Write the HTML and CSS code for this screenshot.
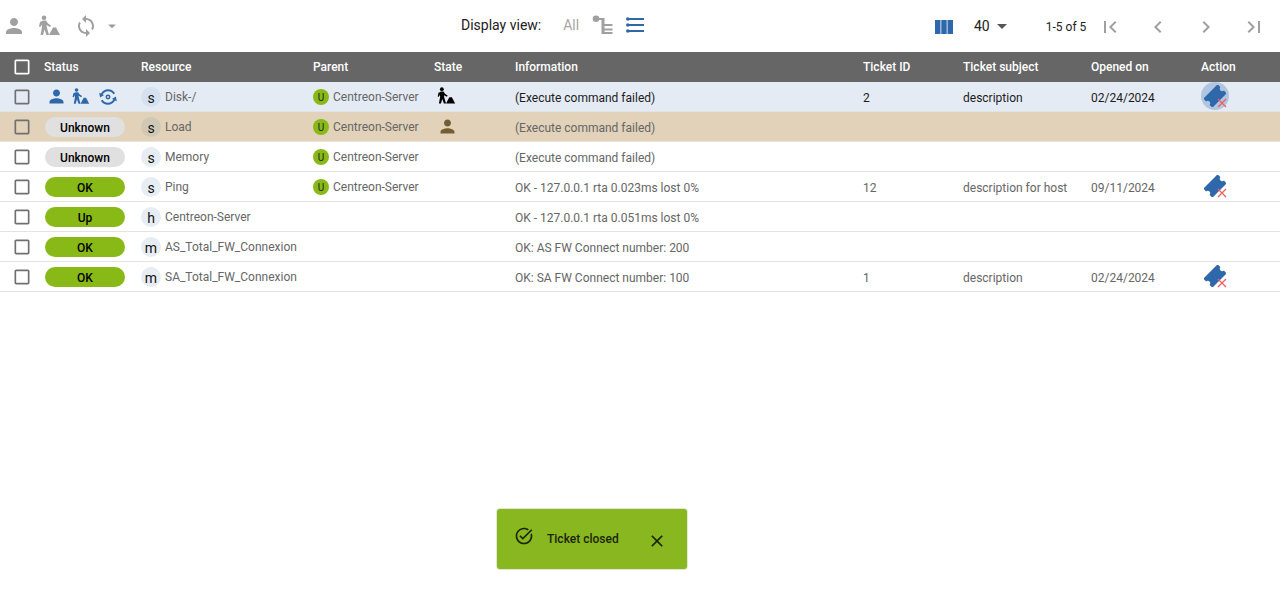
FILE: index.html
```html
<!DOCTYPE html>
<html lang="en">
<head>
<meta charset="utf-8">
<title>Resources</title>
<link rel="stylesheet" href="styles.css">
</head>
<body>
<svg class="defs" width="0" height="0" aria-hidden="true">
  <symbol id="i-person" viewBox="0 0 24 24"><path d="M12 12c2.21 0 4-1.79 4-4s-1.79-4-4-4-4 1.79-4 4 1.79 4 4 4zm0 2c-2.67 0-8 1.34-8 4v2h16v-2c0-2.66-5.33-4-8-4z"/></symbol>
  <symbol id="i-downtime" viewBox="0 0 24 24"><circle cx="7" cy="3.800" r="2.300"/><path d="M3 8 6 6.500h3L11 9.500l3 2-1 1.500-3.500-2 .5 3 2 7H9.500L7.500 15.500 6 21H3.500L5 13l-.5-2.500-1 2.500L2 12.500z"/><path d="M12 21 16 13.500h3L23 21z"/></symbol>
  <symbol id="i-sync" viewBox="0 0 24 24"><path d="M12 4V1L8 5l4 4V6c3.310 0 6 2.690 6 6 0 1.010-.25 1.970-.7 2.800l1.460 1.460C19.540 15.030 20 13.570 20 12c0-4.420-3.580-8-8-8zm0 14c-3.310 0-6-2.690-6-6 0-1.010.25-1.970.7-2.800L5.240 7.740C4.460 8.970 4 10.430 4 12c0 4.420 3.580 8 8 8v3l4-4-4-4v3z"/></symbol>
  <symbol id="i-flapping" viewBox="0 0 24 24"><path d="M12 3.500c-3.300 0-6.200 1.900-7.600 4.700l-2-.7 1 5 4.400-2.600-1.700-.7C7.200 7.100 9.400 5.700 12 5.700c2.500 0 4.700 1.300 5.900 3.300l1.900-1.100C18.200 5.300 15.300 3.500 12 3.500zM12 20.500c3.300 0 6.200-1.900 7.600-4.700l2 .7-1-5-4.400 2.600 1.700.7c-1.100 2-3.300 3.500-5.900 3.500-2.500 0-4.700-1.300-5.900-3.300l-1.900 1.100c1.600 2.600 4.500 4.400 7.800 4.400z"/><path fill-rule="evenodd" d="M12 9.300a2.700 2.700 0 1 0 0 5.400 2.700 2.700 0 0 0 0-5.400zm0 1.700a1 1 0 1 1 0 2 1 1 0 0 1 0-2z"/></symbol>
  <symbol id="i-box" viewBox="0 0 24 24"><path d="M19 5v14H5V5h14m0-2H5c-1.100 0-2 .9-2 2v14c0 1.100.9 2 2 2h14c1.100 0 2-.9 2-2V5c0-1.100-.9-2-2-2z"/></symbol>
  <symbol id="i-caret" viewBox="0 0 24 24"><path d="M7 10l5 5 5-5z"/></symbol>
  <symbol id="i-first" viewBox="0 0 24 24"><path d="M18.410 16.590 13.820 12l4.590-4.590L17 6l-6 6 6 6zM6 6h2v12H6z"/></symbol>
  <symbol id="i-prev" viewBox="0 0 24 24"><path d="M15.410 7.410 14 6l-6 6 6 6 1.410-1.410L10.830 12z"/></symbol>
  <symbol id="i-next" viewBox="0 0 24 24"><path d="M10 6 8.590 7.410 13.170 12l-4.580 4.590L10 18l6-6z"/></symbol>
  <symbol id="i-last" viewBox="0 0 24 24"><path d="M5.590 7.410 10.180 12l-4.590 4.590L7 18l6-6-6-6zM16 6h2v12h-2z"/></symbol>
  <symbol id="i-close" viewBox="0 0 24 24"><path d="M19 6.410 17.590 5 12 10.590 6.410 5 5 6.410 10.590 12 5 17.590 6.410 19 12 13.410 17.590 19 19 17.590 13.410 12z"/></symbol>
  <symbol id="i-task" viewBox="0 0 24 24"><path d="M22 5.180 10.590 16.600l-4.240-4.240 1.410-1.410 2.830 2.830 10-10L22 5.180zm-2.210 5.040c.13.57.21 1.170.21 1.780 0 4.420-3.580 8-8 8s-8-3.580-8-8 3.580-8 8-8c1.580 0 3.040.46 4.280 1.250l1.440-1.440C16.100 2.670 14.130 2 12 2 6.480 2 2 6.480 2 12s4.480 10 10 10 10-4.480 10-10c0-1.190-.22-2.330-.6-3.390l-1.610 1.610z"/></symbol>
  <symbol id="i-ticket" viewBox="0 0 24 24"><path transform="rotate(-45 12 12)" d="M23 9.300V5H1v4.300c1.300 0 2.500 1.200 2.500 2.700S2.300 14.700 1 14.700V19h22v-4.300c-1.300 0-2.500-1.200-2.500-2.700s1.200-2.700 2.500-2.700z"/></symbol>
</svg>

<header class="toolbar">
  <div class="tool-group">
    <svg class="ic ic-person"><use href="#i-person"/></svg>
    <svg class="ic ic-down"><use href="#i-downtime"/></svg>
    <svg class="ic ic-sync"><use href="#i-sync"/></svg>
    <svg class="ic ic-caret"><use href="#i-caret"/></svg>
  </div>
  <div class="view-group">
    <span class="view-label">Display view:</span>
    <span class="view-all">All</span>
    <svg class="view-tree" viewBox="0 0 21 19"><circle cx="4" cy="3.700" r="3.300"/><path d="M6 3h6.500v16H9.500V5H6z"/><path d="M11 9h9.500v2H11zM11 13.500h9.500v2H11zM11 17h9.500v2H11z"/></svg>
    <svg class="view-list" viewBox="0 0 18 16"><circle cx="1.800" cy="2" r="1.800"/><circle cx="1.800" cy="8" r="1.800"/><circle cx="1.800" cy="14" r="1.800"/><path d="M2 1h16v2H2zM2 7h16v2H2zM2 13h16v2H2z"/></svg>
  </div>
  <div class="page-group">
    <svg class="columns" viewBox="0 0 18 14"><path d="M0 0h5.500v14H0zM6.300 0h5.400v14H6.300zM12.500 0H18v14h-5.500z"/></svg>
    <span class="per-page">40</span>
    <svg class="ic ic-per"><use href="#i-caret"/></svg>
    <span class="range">1-5 of 5</span>
    <svg class="ic ic-nav first"><use href="#i-first"/></svg>
    <svg class="ic ic-nav prev"><use href="#i-prev"/></svg>
    <svg class="ic ic-nav next"><use href="#i-next"/></svg>
    <svg class="ic ic-nav last"><use href="#i-last"/></svg>
  </div>
</header>

<main class="table">
  <div class="row head">
    <div class="cell c-box"><svg class="box"><use href="#i-box"/></svg></div>
    <div class="cell">Status</div><div class="cell">Resource</div><div class="cell">Parent</div><div class="cell">State</div><div class="cell">Information</div><div class="cell">Ticket ID</div><div class="cell">Ticket subject</div><div class="cell">Opened on</div><div class="cell">Action</div>
  </div>

  <div class="row selected">
    <div class="cell c-box"><svg class="box"><use href="#i-box"/></svg></div>
    <div class="cell actions">
      <svg class="ra ra-person"><use href="#i-person"/></svg>
      <svg class="ra ra-down"><use href="#i-downtime"/></svg>
      <svg class="ra ra-flap"><use href="#i-flapping"/></svg>
    </div>
    <div class="cell res"><span class="avatar">S</span><span class="name">Disk-/</span></div>
    <div class="cell res"><span class="dot">U</span><span class="name">Centreon-Server</span></div>
    <div class="cell"><svg class="state state-down"><use href="#i-downtime"/></svg></div>
    <div class="cell info">(Execute command failed)</div>
    <div class="cell info">2</div><div class="cell info">description</div><div class="cell info">02/24/2024</div>
    <div class="cell"><span class="ticket hover"><svg class="tk"><use href="#i-ticket"/></svg><svg class="tx" viewBox="0 0 10 10"><path d="M1 1l8 8M9 1l-8 8"/></svg></span></div>
  </div>

  <div class="row ack">
    <div class="cell c-box"><svg class="box"><use href="#i-box"/></svg></div>
    <div class="cell"><span class="pill unknown">Unknown</span></div>
    <div class="cell res"><span class="avatar">S</span><span class="name">Load</span></div>
    <div class="cell res"><span class="dot">U</span><span class="name">Centreon-Server</span></div>
    <div class="cell"><svg class="state state-person"><use href="#i-person"/></svg></div>
    <div class="cell info">(Execute command failed)</div>
    <div class="cell"></div><div class="cell"></div><div class="cell"></div><div class="cell"></div>
  </div>

  <div class="row">
    <div class="cell c-box"><svg class="box"><use href="#i-box"/></svg></div>
    <div class="cell"><span class="pill unknown">Unknown</span></div>
    <div class="cell res"><span class="avatar">S</span><span class="name">Memory</span></div>
    <div class="cell res"><span class="dot">U</span><span class="name">Centreon-Server</span></div>
    <div class="cell"></div>
    <div class="cell info">(Execute command failed)</div>
    <div class="cell"></div><div class="cell"></div><div class="cell"></div><div class="cell"></div>
  </div>

  <div class="row">
    <div class="cell c-box"><svg class="box"><use href="#i-box"/></svg></div>
    <div class="cell"><span class="pill ok">OK</span></div>
    <div class="cell res"><span class="avatar">S</span><span class="name">Ping</span></div>
    <div class="cell res"><span class="dot">U</span><span class="name">Centreon-Server</span></div>
    <div class="cell"></div>
    <div class="cell info">OK - 127.0.0.1 rta 0.023ms lost 0%</div>
    <div class="cell info">12</div><div class="cell info">description for host</div><div class="cell info">09/11/2024</div>
    <div class="cell"><span class="ticket"><svg class="tk"><use href="#i-ticket"/></svg><svg class="tx" viewBox="0 0 10 10"><path d="M1 1l8 8M9 1l-8 8"/></svg></span></div>
  </div>

  <div class="row">
    <div class="cell c-box"><svg class="box"><use href="#i-box"/></svg></div>
    <div class="cell"><span class="pill ok">Up</span></div>
    <div class="cell res"><span class="avatar">H</span><span class="name">Centreon-Server</span></div>
    <div class="cell"></div><div class="cell"></div>
    <div class="cell info">OK - 127.0.0.1 rta 0.051ms lost 0%</div>
    <div class="cell"></div><div class="cell"></div><div class="cell"></div><div class="cell"></div>
  </div>

  <div class="row">
    <div class="cell c-box"><svg class="box"><use href="#i-box"/></svg></div>
    <div class="cell"><span class="pill ok">OK</span></div>
    <div class="cell res wide"><span class="avatar">M</span><span class="name">AS_Total_FW_Connexion</span></div>
    <div class="cell"></div><div class="cell"></div>
    <div class="cell info">OK: AS FW Connect number: 200</div>
    <div class="cell"></div><div class="cell"></div><div class="cell"></div><div class="cell"></div>
  </div>

  <div class="row">
    <div class="cell c-box"><svg class="box"><use href="#i-box"/></svg></div>
    <div class="cell"><span class="pill ok">OK</span></div>
    <div class="cell res wide"><span class="avatar">M</span><span class="name">SA_Total_FW_Connexion</span></div>
    <div class="cell"></div><div class="cell"></div>
    <div class="cell info">OK: SA FW Connect number: 100</div>
    <div class="cell info">1</div><div class="cell info">description</div><div class="cell info">02/24/2024</div>
    <div class="cell"><span class="ticket"><svg class="tk"><use href="#i-ticket"/></svg><svg class="tx" viewBox="0 0 10 10"><path d="M1 1l8 8M9 1l-8 8"/></svg></span></div>
  </div>
</main>

<div class="toast">
  <svg class="toast-check"><use href="#i-task"/></svg>
  <span class="toast-text">Ticket closed</span>
  <svg class="toast-close"><use href="#i-close"/></svg>
</div>
</body>
</html>
```
FILE: styles.css
```css
* { box-sizing: border-box; }
html, body { margin: 0; height: 100%; }
body {
  font-family: Roboto, "Liberation Sans", sans-serif;
  font-size: 12px;
  color: #000;
  background: #fff;
  overflow: hidden;
}
.defs { position: absolute; }
svg { display: block; flex: none; }

/* toolbar */
.toolbar { display: flex; align-items: center; height: 52px; position: relative; }
.tool-group { display: flex; align-items: center; width: 461px; padding-left: 2px; }
.ic { fill: #a0a0a0; }
.ic-person { width: 24px; height: 24px; }
.ic-down { width: 24px; height: 24px; margin-left: 11px; }
.ic-sync { width: 24px; height: 24px; margin-left: 13px; }
.ic-caret { width: 18px; height: 18px; margin-left: 5px; fill: #999; }

.view-group { display: flex; align-items: center; width: 474px; }
.view-label { font-size: 14px; color: #222; margin-top: -2px; }
.view-all { font-size: 14px; color: #a6a6a6; margin-left: 22px; margin-top: -3px; }
.view-tree { width: 21px; height: 19px; margin-left: 13px; fill: #a0a0a0; margin-top: -3px; }
.view-list { width: 18px; height: 16px; margin-left: 13px; fill: #2e68aa; margin-top: -3px; }

.page-group { display: flex; align-items: center; flex: 1; }
.columns { width: 18px; height: 14px; fill: #2e68aa; margin-top: 1px; }
.per-page { font-size: 14px; color: #222; margin-left: 21px; margin-top: -1px; }
.ic-per { width: 24px; height: 24px; fill: #555; }
.range { font-size: 12px; color: #222; margin-left: 32px; margin-top: 1px; }
.ic-nav { width: 24px; height: 24px; margin-top: 1px; }
.first { margin-left: 12px; }
.prev, .next, .last { margin-left: 24px; }

/* table */
.row {
  display: grid;
  grid-template-columns: 44px 97px 172px 121px 81px 348px 100px 128px 110px 79px;
  height: 30px;
  border-bottom: 1px solid #e3e3e3;
  color: #666;
}
.cell { display: flex; align-items: center; min-width: 0; white-space: nowrap; }
.c-box { padding-left: 12px; }
.box { width: 20px; height: 20px; fill: #707070; }
.head { background: #666; color: #fff; font-weight: 500; border-bottom: 0; }
.head .box { fill: #fff; }
.selected { background: #e4ebf5; color: #222; }
.ack { background: #e1d2b9; border-bottom-color: #e9e4dc; }
.info { padding-top: 3px; }
.selected .info { color: #1c1c1c; }

.actions { padding-left: 2px; }
.ra { fill: #2e68aa; }
.ra-person { width: 21px; height: 21px; }
.ra-down { width: 19px; height: 19px; margin-left: 4px; }
.ra-flap { width: 22px; height: 22px; margin-left: 7px; }

.pill {
  display: flex; align-items: center; justify-content: center;
  width: 80px; height: 20px; margin-left: 1px; margin-top: 1px;
  padding-top: 2px;
  border-radius: 10px; color: #000; font-weight: 500;
}
.unknown { background: #e0e0e0; }
.ok { background: #88b917; }

.res { gap: 4px; }
.avatar {
  display: flex; align-items: center; justify-content: center;
  width: 20px; height: 20px; border-radius: 50%;
  padding-top: 2px;
  background: #e7edf5; color: #111; font-size: 14px; text-transform: lowercase;
}
.selected .avatar { background: #d6e1f0; }
.ack .avatar { background: #d0c8b6; }
.name { color: #666; margin-top: 1px; }
.dot {
  display: flex; align-items: center; justify-content: center;
  width: 16px; height: 16px; border-radius: 50%;
  padding-top: 1px;
  background: #88b917; color: #222; font-size: 10px; font-weight: 400;
}
.state-down { width: 20px; height: 20px; margin-left: 2px; margin-top: -1px; fill: #000; }
.state-person { width: 21px; height: 21px; margin-left: 3px; fill: #745f35; }

.ticket { display: block; position: relative; width: 28px; height: 28px; border-radius: 50%; margin-top: -2px; }
.ticket.hover { background: #b0c6e0; }
.tk { position: absolute; left: 3px; top: 3px; width: 22px; height: 22px; fill: #2e68aa; }
.tx { position: absolute; left: 16px; top: 16px; width: 10px; height: 10px; stroke: #f06060; stroke-width: 1.300; fill: none; }

/* toast */
.toast {
  position: absolute; left: 497px; top: 509px;
  width: 190px; height: 60px;
  background: #88b71f;
  border-radius: 3px;
  box-shadow: 0 0 0 1px #e2e8d5;
  color: #1c2408;
}
.toast-check { position: absolute; left: 17px; top: 17px; width: 20px; height: 20px; fill: #1c2408; }
.toast-text { position: absolute; left: 50px; top: 23px; font-weight: 500; }
.toast-close { position: absolute; left: 150px; top: 22px; width: 20px; height: 20px; fill: #1c2408; }
```
